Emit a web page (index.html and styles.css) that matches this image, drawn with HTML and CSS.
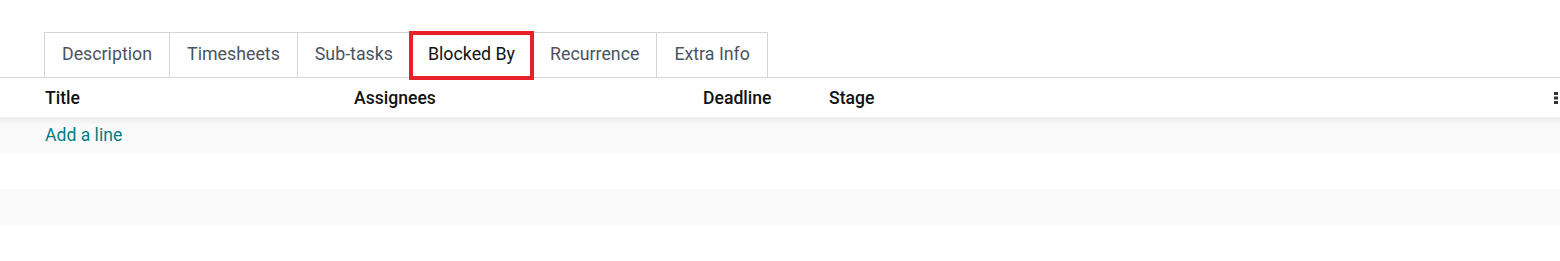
FILE: index.html
```html
<!DOCTYPE html>
<html lang="en">
<head>
    <meta charset="UTF-8">
    <title>Task</title>
    <link rel="stylesheet" href="styles.css">
</head>
<body>
    <div class="notebook">
        <ul class="tabs">
            <li class="tab">Description</li>
            <li class="tab">Timesheets</li>
            <li class="tab">Sub-tasks</li>
            <li class="tab active">Blocked By</li>
            <li class="tab">Recurrence</li>
            <li class="tab">Extra Info</li>
        </ul>
        <table class="list">
            <thead>
                <tr>
                    <th class="col-title">Title</th>
                    <th class="col-assignees">Assignees</th>
                    <th class="col-deadline">Deadline</th>
                    <th class="col-stage">Stage</th>
                    <th class="col-opt">
                        <svg width="4" height="12" viewBox="0 0 4 12"><rect x="0" y="0" width="4" height="3" fill="#333"/><rect x="0" y="4.5" width="4" height="3" fill="#333"/><rect x="0" y="9" width="4" height="3" fill="#333"/></svg>
                    </th>
                </tr>
            </thead>
            <tbody>
                <tr class="odd first"><td colspan="5"><a class="add-line">Add a line</a></td></tr>
                <tr><td colspan="5"></td></tr>
                <tr class="odd"><td colspan="5"></td></tr>
            </tbody>
        </table>
    </div>
</body>
</html>
```
FILE: styles.css
```css
body {
    margin: 0;
    font-family: Roboto, "Noto Sans", sans-serif;
    background: #fff;
    color: #111;
}
.notebook {
    padding-top: 32px;
}
.tabs {
    list-style: none;
    margin: 0;
    padding: 0 0 0 44px;
    display: flex;
    border-bottom: 1px solid #d2d4d8;
}
.tab {
    height: 44px;
    line-height: 42px;
    padding: 0 17px;
    font-size: 17.8px;
    color: #4a5461;
    border: 1px solid #d2d4d8;
    border-bottom: none;
    margin-left: -1px;
    margin-bottom: -1px;
    background: #fff;
}
.tab:first-child {
    margin-left: 0;
}
.tab.active {
    color: #111;
    position: relative;
    height: 45px;
}
.tab.active::after {
    content: "";
    position: absolute;
    left: -2px;
    right: -2px;
    top: -2px;
    bottom: -2px;
    border: 4px solid #e8202a;
}
.list {
    width: 100%;
    border-collapse: collapse;
    font-size: 17.6px;
}
.list thead tr {
    height: 39px;
}
.list th {
    text-align: left;
    font-weight: 500;
    padding: 0;
}
.col-title { padding-left: 45px !important; width: 309px; }
.col-assignees { width: 349px; }
.col-deadline { width: 126px; }
.col-opt { text-align: right !important; padding-right: 2px !important; }
.col-opt svg { display: block; margin-left: auto; }
.list td {
    height: 36px;
    padding: 0 0 0 45px;
}
.list tbody tr.odd {
    background: #fafafa;
}
.list tbody tr.first td {
    background: linear-gradient(#ececec, #fafafa 8px);
}
.add-line {
    color: #017e84;
    cursor: pointer;
}
```
